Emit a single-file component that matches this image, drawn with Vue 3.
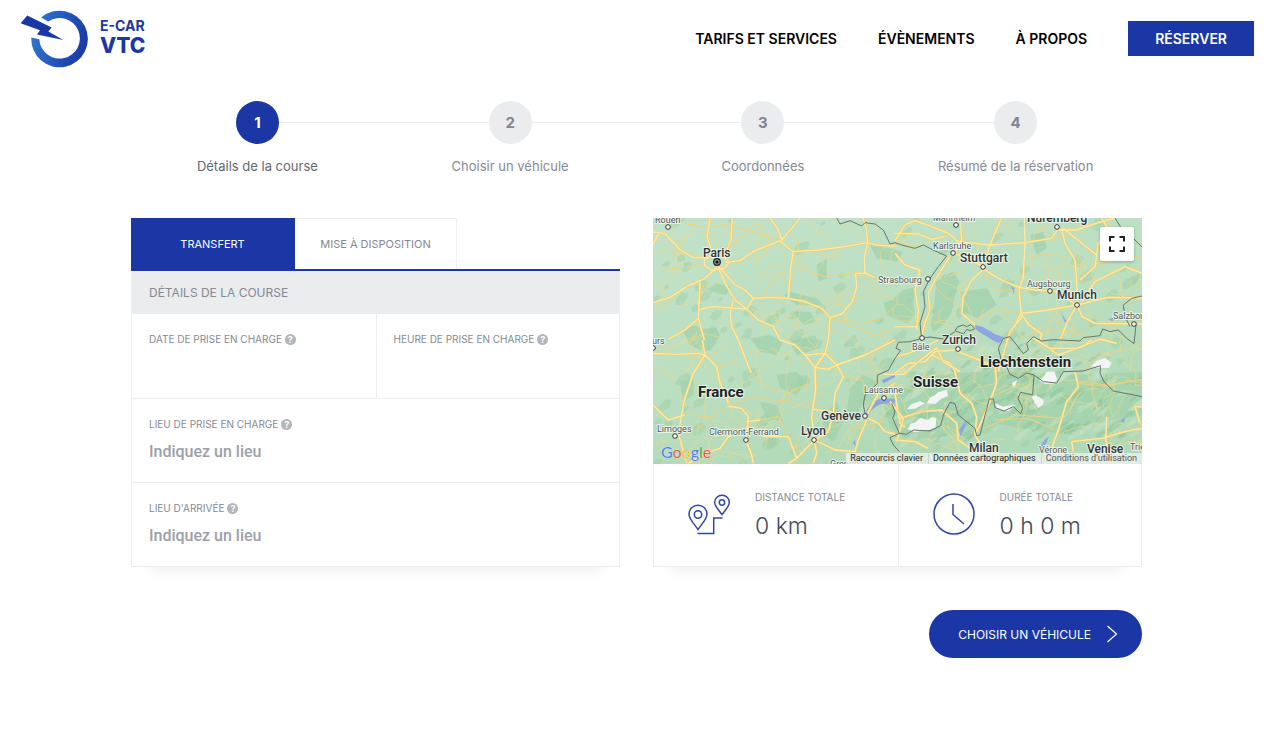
<script setup>
import { ref } from 'vue'

const steps = [
  { n: 1, label: 'Détails de la course' },
  { n: 2, label: 'Choisir un véhicule' },
  { n: 3, label: 'Coordonnées' },
  { n: 4, label: 'Résumé de la réservation' },
]
const current = ref(1)
const tab = ref('transfert')
const form = ref({ date: '', time: '', from: '', to: '' })

// Deterministic noise for the terrain texture
let seed = 7
const rnd = () => {
  seed = (seed * 1664525 + 1013904223) % 4294967296
  return seed / 4294967296
}
const blob = (cx, cy, rx, ry) => {
  const pts = []
  const tilt = -0.6
  for (let i = 0; i < 11; i++) {
    const a = (i / 11) * Math.PI * 2
    const k = 0.65 + rnd() * 0.45
    const u = Math.cos(a) * rx * k
    const v = Math.sin(a) * ry * k
    pts.push(
      (cx + u * Math.cos(tilt) - v * Math.sin(tilt)).toFixed(1) +
        ' ' +
        (cy + u * Math.sin(tilt) + v * Math.cos(tilt)).toFixed(1)
    )
  }
  return 'M' + pts.join('L') + 'Z'
}
const forests = []
for (let i = 0; i < 120; i++) {
  const x = 653 + rnd() * 489
  const y = 218 + rnd() * 246
  const s = 2 + rnd() * 5
  forests.push(blob(x, y, s * 1.5, s * 0.9))
}
const ridges = []
const glints = []
for (let i = 0; i < 170; i++) {
  const x = 890 + rnd() * 250
  const y = 345 + rnd() * 95
  if (y < 370 && x < 960) continue
  const s = 2 + rnd() * 4
  const target = i % 2 ? ridges : glints
  target.push(blob(x, y, s * 2, s * 0.6))
}
const lanes = []
for (let i = 0; i < 230; i++) {
  let x = 653 + rnd() * 489
  let y = 218 + rnd() * 246
  let a = rnd() * 6.28
  let d = `M${x.toFixed(1)} ${y.toFixed(1)}`
  for (let j = 0; j < 11; j++) {
    a += (rnd() - 0.5) * 1.3
    x += Math.cos(a) * 4
    y += Math.sin(a) * 4
    d += `L${x.toFixed(1)} ${y.toFixed(1)}`
  }
  lanes.push(d)
}

const woods =
  'M100 350L112 336 135 332 160 342 200 340 210 362 198 385 180 408 150 404 120 390ZM858 200L880 180 912 170 928 200 915 240 905 290 880 330 850 352 842 330 852 280ZM700 265L725 255 760 225 800 215 790 260 795 300 770 325 735 312 712 300ZM420 380L455 370 520 375 510 400 440 420ZM300 370L360 360 400 380 380 420 330 410ZM170 220L200 205 240 215 230 240 200 235ZM400 240L425 232 500 250 520 270 440 270ZM430 290L480 290 500 320 460 330ZM500 150L530 130 530 190 505 200ZM600 520L640 480 680 500 640 560 610 620 590 590ZM380 480L440 470 470 500 440 540 390 520ZM930 230L1010 220 1040 270 980 310 940 290ZM1140 60L1180 50 1190 100 1160 120ZM660 90L720 100 760 110 740 140 680 130ZM520 600L560 560 580 620 550 680 520 660ZM330 560L380 570 400 620 350 610ZM90 500L130 490 130 540 100 560ZM700 560L760 520 860 480 980 470 1100 470 1290 480 1476 470 1476 600 1330 620 1260 660 1120 640 1000 620 900 660 780 680 720 640Z'

// Each sector is drawn at three times the map scale
const sectors = [
  {
    t: 'translate(645 210) scale(0.33333)',
    roads:
      'M24 66L60 70 78 90 105 120 145 142 190 145M24 104L40 72M240 158L285 152 330 122 405 92 425 110 445 125 438 165 430 265M375 24L398 55 410 90 440 55 465 24M445 125L520 120 600 110 665 98 700 106 750 108M654 24L665 60 668 100 658 140 660 190 690 202M660 190L632 190 635 230 622 275 590 312 555 322M430 265L380 262 325 265 300 240 270 225 240 190 217 165 240 220 270 270 305 297 340 330 385 350 405 390M325 265L305 297M430 265L480 275 530 295 555 322 550 390M24 278L75 262 125 230 180 205 217 170M165 215L160 325 178 390M160 325L120 360 70 388M160 300L200 290 305 297M265 270L255 310 260 350 280 390M195 24L186 80 205 140M262 24L258 90 235 145M178 150L198 136 236 138 252 158 238 176 200 180 178 166Z',
    minor:
      'M325 60L260 105 235 145M115 40L180 52 250 45 325 66 405 90M455 140L480 180 540 200 660 185M555 322L620 350 690 375 750 355M660 195L690 235 720 260 750 270M50 180L120 172 180 160M350 265L380 210 430 190M555 322L640 340 700 330 750 290',
    borders: 'M575 24L585 42 615 32 650 48 660 38 690 42 715 60 735 102 750 98',
  },
  {
    t: 'translate(895 210) scale(0.33333)',
    roads:
      'M0 92L30 45 60 32 110 50 160 70 190 95 285 105 390 98 470 85 487 60 545 60 610 38 660 24M195 24L200 90 180 130 266 170M320 24L300 70 285 105 266 170M388 24L390 98 385 200 372 240 378 310 335 390M500 55L510 100 540 150 545 215 546 285M505 55L560 100 605 135 610 100 640 60 620 24M605 135L600 170 555 210M266 178L320 210 372 232 420 240 490 245 540 282M266 178L230 210 205 260 200 310 240 345M546 285L640 262 742 264M546 285L520 330 495 390M546 285L562 320 600 340 742 342M378 310L460 300 546 285M378 310L402 345 440 372 436 390M560 275L600 215 690 170 742 190M165 140L120 210 100 250 105 300 90 340 75 390M0 130L30 165 75 180 60 240 70 300 65 360M0 70L70 72 110 88 150 80M0 350L65 350',
    minor:
      'M110 220L150 260 200 290M266 178L300 240 372 240M390 150L450 130 510 140M205 180L160 200M600 170L660 150 742 140M378 310L300 300 240 330M410 370L500 360 590 380',
    borders:
      'M0 98L20 105 60 115 85 105 118 122 155 138 130 170 105 205 85 245 90 290 75 340 80 388M660 24L676 50 690 60 742 112M742 258L710 265 685 285 690 320 705 350M180 362L188 350 205 345 215 350 228 344 240 356 226 362 216 358 205 372Z',
    water:
      'M240 345L262 350 300 372 325 382 320 390 296 392 262 372 244 360ZM496 302L504 318 514 332 518 342 508 334ZM640 328L658 322 652 334ZM348 228L360 236 356 252Z',
  },
  {
    t: 'translate(645 340) scale(0.33333)',
    roads:
      'M24 40L100 43 160 40 180 45M172 0L180 45 215 80 225 130 250 190M180 45L145 100 118 180 100 280 125 370M280 0L295 40 318 98M250 198L290 205 310 230 303 300 320 345 325 370M303 270L250 290 225 325 180 340 130 370M303 245L345 240M405 0L450 15 480 45 510 82 512 150 500 230 508 300M480 45L540 40 550 0M510 82L550 88 575 75 660 45 720 15 750 0M540 40L510 82M540 40L575 75 595 110 570 160 565 220 550 275 510 300M508 208L560 215M508 300L455 355 430 290 360 290 310 270M455 355L430 370M508 300L515 340 505 370M508 300L570 330 630 335 640 300 665 240M670 235L700 250 720 275 750 282M668 220L700 160 750 130M24 195L70 240 118 225',
    minor:
      'M118 225L200 230 250 198 320 172 380 180 430 185 495 205M320 100L360 140 430 160 490 130M220 80L280 68M660 45L690 90 695 130M345 240L400 230 430 290M595 110L650 120M430 185L440 150 495 135',
    borders: '',
    water:
      'M662 224Q665 195 700 178L750 176 750 190 708 192Q678 205 670 226ZM710 120L750 104 750 112 716 130ZM624 308L630 298 632 322Z',
  },
  {
    t: 'translate(895 340) scale(0.33333)',
    roads:
      'M0 100L40 70 90 65 120 35 180 30M110 45L165 70 180 95 195 160 230 190 245 230 240 285M0 160L15 250 30 262M190 35L240 55 300 80 305 130 290 170 262 240 240 285M15 235L80 215 140 210 185 250 190 300 225 325M540 95L550 140 515 185 490 270 470 325M450 15L490 45 560 20 590 0M530 305L620 295 690 275 742 265M635 230L632 300 640 335M742 200L720 200 735 250M0 300L60 305 100 325M530 305L535 335M0 50L40 40 90 20 130 0M240 285L260 320',
    minor:
      'M550 130L640 140 700 122 742 128M290 170L380 130 412 160M300 240L400 235 480 270M560 92L620 40 700 30 742 10M30 120L90 110 165 95M400 60L460 50M190 300L150 320M640 335L680 310 742 300M0 130L60 150',
    borders: '',
    water:
      'M197 290L192 270 214 240 210 262ZM432 325L450 298 462 290 446 326ZM292 0L322 0 312 10ZM166 86L182 92 176 98ZM676 240L690 232 686 250ZM244 262L262 236 254 262Z',
    snow: 'M95 190L106 172 120 166 130 156 155 150 160 168 140 176 120 192ZM35 208L50 192 75 184 90 190 60 206ZM38 268L48 250 60 248 75 234 100 240 110 232 124 234 122 262 100 270 60 276ZM433 122L445 112 455 95 478 94 486 116 478 130 450 132ZM410 170L424 166 446 180 444 194 430 204 420 190ZM588 78L606 62 630 54 650 68 642 84 612 84ZM298 188L324 200 362 194 340 214 305 207ZM350 130L366 120 358 146Z',
  },
  {
    t: 'translate(650 215) scale(0.33333)',
    roads: 'M700 478L760 478 800 445 860 398 880 440 930 470M1120 300L1080 350 1045 470M1150 370L1200 400 1280 400 1350 372 1400 385M720 560L760 610 740 680M950 420L1000 440',
    minor: 'M1290 500L1370 510 1476 495M760 610L850 580 880 600M1000 640L1100 600 1240 610M590 690L620 640 700 620',
    borders:
      'M815 370L780 380 745 382 738 400 752 406 735 430 715 466 682 480 682 506 645 540 640 570 646 600M725 565L735 590 728 610 748 655 720 668 730 690 748 710M748 655L770 658 790 645 840 648 872 632 880 600 900 562 915 566 925 600 975 640 980 662 990 660 1000 620 1018 552 1030 552 1036 578 1062 588 1090 575 1112 596 1118 580 1104 550 1112 532 1148 540 1152 480 1130 474 1105 490 1080 478 1070 455M1152 480L1180 500 1220 504 1240 470 1300 468 1352 452 1350 474 1362 500 1390 528 1476 545M1060 370L1045 400 1055 440 1070 455M1060 370L1080 365 1100 390 1120 416 1135 405 1130 385 1150 365 1175 378 1210 374 1290 378 1300 368 1350 362 1358 342 1380 350 1405 345 1430 370 1452 386 1458 330M815 370L840 366 880 372 915 350',
  },
]

const cities = [
  { n: 'Rouen', x: 655, y: 223, c: 'town', px: 668, py: 227 },
  { n: 'Paris', x: 703, y: 257, c: 'city' },
  { n: 'Strasbourg', x: 878, y: 283, c: 'town', px: 928, py: 279 },
  { n: 'Mannheim', x: 933, y: 221, c: 'town', px: 956, py: 225 },
  { n: 'Karlsruhe', x: 933, y: 249, c: 'town', px: 953, py: 253 },
  { n: 'Stuttgart', x: 960, y: 262, c: 'city', px: 983, py: 267 },
  { n: 'Nuremberg', x: 1027, y: 222, c: 'city', px: 1057, py: 227 },
  { n: 'Augsbourg', x: 1027, y: 287, c: 'town', px: 1050, py: 291 },
  { n: 'Munich', x: 1057, y: 299, c: 'city', px: 1077, py: 305 },
  { n: 'Salzbourg', x: 1113, y: 319, c: 'town', px: 1134, py: 324 },
  { n: 'Bâle', x: 912, y: 350, c: 'town', px: 922, py: 338 },
  { n: 'Zurich', x: 942, y: 344, c: 'city', px: 958, py: 349 },
  { n: 'Tours', x: 642, y: 344, c: 'town', px: 653, py: 348 },
  { n: 'Liechtenstein', x: 980, y: 367, c: 'country' },
  { n: 'Suisse', x: 913, y: 387, c: 'country' },
  { n: 'France', x: 698, y: 397, c: 'country' },
  { n: 'Lausanne', x: 864, y: 393, c: 'town', px: 884, py: 398 },
  { n: 'Genève', x: 821, y: 420, c: 'city', px: 865, py: 416 },
  { n: 'Limoges', x: 657, y: 432, c: 'town', px: 675, py: 436 },
  { n: 'Clermont-Ferrand', x: 709, y: 435, c: 'town', px: 746, py: 440 },
  { n: 'Lyon', x: 801, y: 435, c: 'city', px: 814, py: 440 },
  { n: 'Grenoble', x: 830, y: 467, c: 'town' },
  { n: 'Milan', x: 969, y: 452, c: 'city', px: 984, py: 457 },
  { n: 'Vérone', x: 1039, y: 453, c: 'town' },
  { n: 'Venise', x: 1087, y: 453, c: 'city', px: 1107, py: 457 },
  { n: 'Trieste', x: 1130, y: 450, c: 'town' },
]
</script>

<template>
  <div class="page">
    <header class="header">
      <a class="logo" href="#">
        <svg width="70" height="60" viewBox="0 -1 70 60" aria-hidden="true">
          <defs>
            <linearGradient id="ring" x1="0" y1="0.3" x2="1" y2="0.6">
              <stop offset="0" stop-color="#3179d0" />
              <stop offset="1" stop-color="#1a37a5" />
            </linearGradient>
          </defs>
          <path
            d="M21 8.600A28.300 28.300 0 1 1 11.300 28.600L19.300 30.300A20.300 20.300 0 1 0 28.200 12.500Z"
            fill="url(#ring)"
          />
          <path d="M7.300 6.500L31.600 18.500 28.300 22.500 43.300 31 17 25.500 20 21.300 0.600 14.200Z" fill="#1a37a5" />
        </svg>
        <span class="brand"><span class="brand-top">E-CAR</span><span class="brand-main">VTC</span></span>
      </a>
      <nav class="nav">
        <a href="#">TARIFS ET SERVICES</a>
        <a href="#">ÉVÈNEMENTS</a>
        <a href="#">À PROPOS</a>
        <a class="reserve" href="#">RÉSERVER</a>
      </nav>
    </header>

    <main class="main">
      <ol class="steps">
        <li v-for="s in steps" :key="s.n" class="step" :class="{ active: s.n === current }">
          <span class="num">{{ s.n }}</span>
          <span class="step-label">{{ s.label }}</span>
        </li>
      </ol>

      <div class="columns">
        <form class="booking" @submit.prevent>
          <div class="tabs" role="tablist">
            <button type="button" role="tab" :class="{ on: tab === 'transfert' }" @click="tab = 'transfert'">TRANSFERT</button>
            <button type="button" role="tab" :class="{ on: tab === 'dispo' }" @click="tab = 'dispo'">MISE À DISPOSITION</button>
          </div>
          <div class="fields">
            <h2>DÉTAILS DE LA COURSE</h2>
            <div class="pair">
              <div class="field">
                <label for="date">DATE DE PRISE EN CHARGE <i class="help">?</i></label>
                <input id="date" v-model="form.date" type="text" />
              </div>
              <div class="field">
                <label for="time">HEURE DE PRISE EN CHARGE <i class="help">?</i></label>
                <input id="time" v-model="form.time" type="text" />
              </div>
            </div>
            <div class="field">
              <label for="from">LIEU DE PRISE EN CHARGE <i class="help">?</i></label>
              <input id="from" v-model="form.from" type="text" placeholder="Indiquez un lieu" />
            </div>
            <div class="field">
              <label for="to">LIEU D'ARRIVÉE <i class="help">?</i></label>
              <input id="to" v-model="form.to" type="text" placeholder="Indiquez un lieu" />
            </div>
          </div>
        </form>

        <section class="trip">
          <div class="map">
            <svg class="terrain" viewBox="653 218 489 246" preserveAspectRatio="xMidYMid slice">
              <defs>
                <linearGradient id="land" x1="0" y1="0" x2="0.5" y2="1">
                  <stop offset="0" stop-color="#c1e2c9" />
                  <stop offset="0.55" stop-color="#bbdfc1" />
                  <stop offset="1" stop-color="#b0d9b7" />
                </linearGradient>
              </defs>
              <rect x="653" y="218" width="489" height="246" fill="url(#land)" />
              <path :d="woods" class="woods" transform="translate(650 215) scale(0.33333)" />
              <path v-for="(d, i) in forests" :key="'f' + i" :d="d" class="forest" />
              <path v-for="(d, i) in ridges" :key="'r' + i" :d="d" class="ridge" />
              <path v-for="(d, i) in glints" :key="'g' + i" :d="d" class="glint" />
              <path v-for="(d, i) in lanes" :key="'l' + i" :d="d" class="lane" />
              <g v-for="(s, i) in sectors" :key="i" :transform="s.t">
                <path v-if="s.snow" :d="s.snow" class="snow" />
                <path v-if="s.water" :d="s.water" class="water" />
                <path :d="s.minor" class="minor" />
                <path :d="s.roads" class="casing" />
                <path :d="s.roads" class="road" />
                <path v-if="s.borders" :d="s.borders" class="border" />
              </g>
              <g v-for="c in cities" :key="c.n">
                <circle v-if="c.px" :cx="c.px" :cy="c.py" r="2.300" class="pin" />
                <text :x="c.x" :y="c.y" class="label" :class="c.c">{{ c.n }}</text>
              </g>
              <circle cx="717" cy="262" r="3.300" fill="#8b8f8b" stroke="#222" stroke-width="1.200" />
              <circle cx="717" cy="262" r="1.500" fill="#111" />
            </svg>
            <span class="google"><b class="b">G</b><b class="r">o</b><b class="y">o</b><b class="b">g</b><b class="g">l</b><b class="r">e</b></span>
            <button class="full" type="button" aria-label="Plein écran">
              <svg width="16" height="16" viewBox="0 0 16 16" fill="none" stroke="#222" stroke-width="2">
                <path d="M1 5.500V1H5.500M10.500 1H15V5.500M15 10.500V15H10.500M5.500 15H1V10.500" />
              </svg>
            </button>
            <div class="legal">
              <a href="#">Raccourcis clavier</a><a href="#">Données cartographiques</a><a class="terms" href="#">Conditions d'utilisation</a>
            </div>
          </div>
          <div class="totals">
            <div class="total">
              <svg width="42" height="42" viewBox="0 0 42 42" fill="none" stroke="#3346a5" stroke-width="1.500" aria-hidden="true">
                <path d="M10 36.500C7 32 1 26 1 21.200A9 9 0 0 1 19 21.200C19 26 13 32 10 36.500Z" />
                <circle cx="10" cy="21.500" r="3.700" />
                <path d="M34 21.500C31.500 18 26.700 13.500 26.700 9.500A7.300 7.300 0 0 1 41.300 9.500C41.300 13.500 36.500 18 34 21.500Z" />
                <circle cx="34" cy="9.500" r="2.700" />
                <path d="M9.500 40.500H25.700V25H34.500" />
              </svg>
              <div>
                <div class="cap">DISTANCE TOTALE</div>
                <div class="val">0 km</div>
              </div>
            </div>
            <div class="total">
              <svg width="42" height="42" viewBox="0 0 42 42" fill="none" stroke="#3346a5" stroke-width="1.500" aria-hidden="true">
                <circle cx="21" cy="21" r="20" />
                <path d="M20 11V21.500L31 31" />
              </svg>
              <div>
                <div class="cap">DURÉE TOTALE</div>
                <div class="val">0 h 0 m</div>
              </div>
            </div>
          </div>
        </section>
      </div>

      <div class="actions">
        <button class="next" type="button">
          CHOISIR UN VÉHICULE
          <svg width="12" height="18" viewBox="0 0 12 18" fill="none" stroke="#fff" stroke-width="1.200" aria-hidden="true">
            <path d="M1.500 1L10.500 9L1.500 17" />
          </svg>
        </button>
      </div>
    </main>
  </div>
</template>

<style>
body {
  background: #fff;
}
</style>

<style scoped>
.page,
.page * {
  box-sizing: border-box;
}
.page {
  font-family: Inter, 'Liberation Sans', sans-serif;
  color: #858993;
}
button,
input {
  font-family: inherit;
}
a {
  text-decoration: none;
  color: inherit;
}
.header {
  display: flex;
  justify-content: space-between;
  align-items: center;
  height: 76px;
  padding: 0 24px 0 20px;
}
.logo {
  display: flex;
  align-items: center;
  gap: 10px;
  color: #1a37a5;
}
.brand {
  display: flex;
  flex-direction: column;
  padding-bottom: 3px;
  font-weight: 800;
}
.brand-top {
  font-size: 14px;
  font-weight: 700;
  line-height: 18px;
}
.brand-main {
  font-size: 21px;
  line-height: 22px;
}
.nav {
  display: flex;
  align-items: center;
  gap: 41px;
  font-size: 14px;
  font-weight: 600;
  color: #000;
}
.reserve {
  padding: 0 27px;
  line-height: 35px;
  background: #1a37a5;
  color: #fff;
}
.main {
  padding: 25px 136px 0 131px;
}
.steps {
  display: grid;
  grid-template-columns: repeat(4, 1fr);
  margin: 0;
  padding: 0;
  list-style: none;
}
.step {
  position: relative;
  display: flex;
  flex-direction: column;
  align-items: center;
  gap: 12px;
}
.step + .step::before {
  content: '';
  position: absolute;
  top: 21px;
  right: 50%;
  width: 100%;
  height: 1px;
  background: #eff0f1;
}
.num {
  z-index: 1;
  width: 43px;
  height: 43px;
  line-height: 43px;
  border-radius: 50%;
  background: #eaecee;
  color: #808591;
  font-size: 15px;
  font-weight: 700;
  text-align: center;
}
.step-label {
  font-size: 13px;
  line-height: 20px;
}
.active .num {
  background: #1a37a5;
  color: #fff;
}
.active .step-label {
  color: #62676f;
}
.step:first-child .num {
  z-index: 2;
}
.columns {
  display: grid;
  grid-template-columns: 1fr 1fr;
  gap: 33px;
  margin-top: 42px;
}
.booking,
.trip {
  box-shadow: 0 22px 12px -18px rgba(0, 0, 0, 0.06);
}
.tabs {
  display: flex;
  height: 53px;
  border-bottom: 2px solid #1a37a5;
}
.tabs button {
  padding: 0 25px;
  min-width: 162px;
  border: 1px solid #eff0f1;
  border-width: 1px 1px 0 0;
  background: #fff;
  color: #858993;
  font-size: 11px;
}
.tabs .on {
  min-width: 164px;
  border-color: #1a37a5;
  background: #1a37a5;
  color: #fff;
}
.fields {
  border: 1px solid #eceeef;
  border-top: 0;
}
h2 {
  margin: 0;
  padding: 0 17px;
  font-size: 12px;
  font-weight: 400;
  line-height: 43px;
  background: #eaecee;
}
.pair {
  display: grid;
  grid-template-columns: 1fr 1fr;
}
.pair .field + .field {
  border-left: 1px solid #eceeef;
}
.field {
  height: 84px;
  padding: 17px 17px 0;
}
.pair + .field,
.field + .field {
  border-top: 1px solid #eceeef;
}
.pair .field + .field {
  border-top: 0;
}
label {
  display: flex;
  align-items: center;
  gap: 3px;
  font-size: 10px;
  line-height: 16px;
}
.help {
  width: 11px;
  height: 11px;
  border-radius: 50%;
  background: #b3b6ba;
  color: #fff;
  font-size: 9px;
  font-style: normal;
  font-weight: 700;
  line-height: 11px;
  text-align: center;
}
input {
  display: block;
  width: 100%;
  height: 26px;
  margin-top: 6px;
  padding: 0;
  border: 0;
  outline: 0;
  background: transparent;
  font-family: Roboto, sans-serif;
  font-size: 16px;
  font-weight: 500;
  color: #555b66;
}
input::placeholder {
  color: #9da0a9;
  opacity: 1;
}
.map {
  position: relative;
  height: 246px;
  overflow: hidden;
}
.terrain {
  display: block;
  width: 100%;
  height: 100%;
  font-family: Roboto, sans-serif;
}
.woods {
  fill: #a2d1ab;
  opacity: 0.75;
}
.forest {
  fill: #9fd0a8;
  opacity: 0.5;
}
.ridge {
  fill: #86bf97;
  opacity: 0.38;
}
.glint {
  fill: #cfe6cd;
  opacity: 0.4;
}
.lane {
  fill: none;
  stroke: #e9d88c;
  stroke-width: 0.7;
}
.snow {
  fill: #f3f4f4;
}
.water {
  fill: #8ea6e2;
}
.minor,
.casing,
.road,
.border {
  fill: none;
  stroke-linejoin: round;
}
.minor {
  stroke: #efd27d;
  stroke-width: 3px;
}
.casing {
  stroke: #f3cd6c;
  stroke-width: 7px;
}
.road {
  stroke: #fdeaa9;
  stroke-width: 4px;
}
.border {
  stroke: #66756d;
  stroke-width: 3px;
}
.pin {
  fill: #fff;
  stroke: #333;
  stroke-width: 1px;
}
.label {
  fill: #333;
  stroke: #e8f4ea;
  stroke-width: 2px;
  stroke-linejoin: round;
  paint-order: stroke;
}
.town {
  font-size: 9px;
  fill: #555;
}
.city {
  font-size: 12px;
  font-weight: 500;
}
.country {
  font-size: 15px;
  font-weight: 700;
  fill: #222;
}
.google {
  position: absolute;
  left: 8px;
  bottom: 1px;
  font-size: 16px;
  line-height: 22px;
}
.google b {
  font-family: Lato, sans-serif;
  font-weight: 400;
  text-shadow: 0 0 1px #fff;
}
.b {
  color: #4a80ee;
}
.r {
  color: #e8584b;
}
.y {
  color: #f2bd2c;
}
.g {
  color: #42a65a;
}
.full {
  position: absolute;
  top: 9px;
  right: 8px;
  display: flex;
  align-items: center;
  justify-content: center;
  width: 34px;
  height: 34px;
  padding: 0;
  border: 0;
  border-radius: 2px;
  background: #fff;
  box-shadow: 0 1px 3px rgba(0, 0, 0, 0.25);
}
.legal {
  position: absolute;
  right: 0;
  bottom: 0;
  display: flex;
  font-family: Roboto, sans-serif;
  font-size: 9px;
  line-height: 11px;
  color: #222;
}
.legal a {
  padding: 0 5px 0 4px;
  background: rgba(245, 245, 245, 0.7);
  white-space: nowrap;
}
.legal a + a {
  border-left: 1px solid rgba(150, 160, 150, 0.3);
}
.legal .terms {
  color: #555;
}
.totals {
  display: grid;
  grid-template-columns: 1fr 1fr;
  border: 1px solid #eceeef;
  border-top: 0;
}
.total {
  display: flex;
  align-items: flex-start;
  gap: 25px;
  height: 102px;
  padding: 25px 0 0 34px;
}
.total > svg {
  margin-top: 4px;
}
.total + .total {
  border-left: 1px solid #eceeef;
}
.cap {
  font-size: 10px;
  line-height: 16px;
}
.val {
  margin-top: 4px;
  font-size: 23px;
  font-weight: 300;
  line-height: 34px;
  color: #444d56;
}
.actions {
  display: flex;
  justify-content: flex-end;
  margin-top: 43px;
}
.next {
  display: flex;
  align-items: center;
  gap: 15px;
  height: 48px;
  padding: 0 24px 0 29px;
  border: 0;
  border-radius: 24px;
  background: #1a37a5;
  color: #fff;
  font-size: 12px;
}
</style>
